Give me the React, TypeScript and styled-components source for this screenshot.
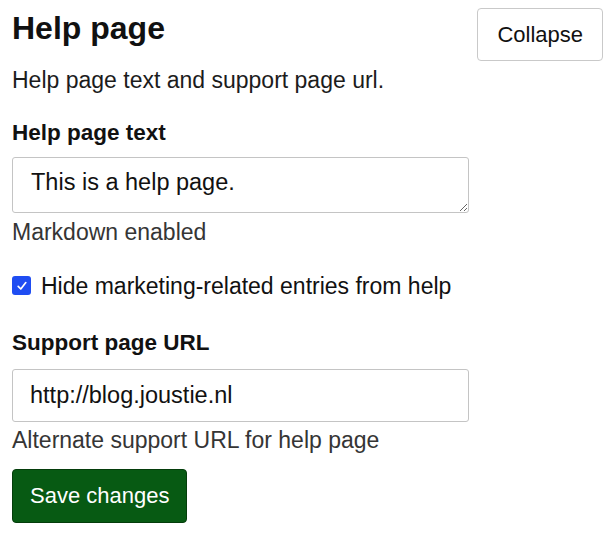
import styled, { createGlobalStyle } from "styled-components";

const GlobalStyle = createGlobalStyle`
  html, body {
    margin: 0;
    padding: 0;
    background: #ffffff;
  }
  body {
    font-family: "Liberation Sans", Arial, sans-serif;
    color: #1c1c1c;
  }
  * {
    box-sizing: border-box;
  }
`;

const Page = styled.div`
  padding: 8px 11px 0 12px;
  width: 614px;
`;

const Header = styled.div`
  display: flex;
  justify-content: space-between;
  align-items: flex-start;
`;

const Title = styled.h2`
  margin: 1px 0 0;
  font-size: 32px;
  line-height: 38px;
  font-weight: 700;
  color: #111;
`;

const Button = styled.button<{ $primary?: boolean }>`
  height: ${(p) => (p.$primary ? "54px" : "53px")};
  padding: 0 ${(p) => (p.$primary ? "17px" : "19px")};
  font-family: "Liberation Sans", Arial, sans-serif;
  font-size: 22px;
  border-radius: 4px;
  border: 1px solid ${(p) => (p.$primary ? "#043d0b" : "#c9c9c9")};
  background: ${(p) => (p.$primary ? "#075a13" : "#ffffff")};
  color: ${(p) => (p.$primary ? "#ffffff" : "#111")};
  cursor: pointer;
`;

const Description = styled.p`
  margin: 4px 0 0;
  font-size: 23px;
  line-height: 30px;
  color: #1c1c1c;
`;

const Form = styled.form`
  display: flex;
  flex-direction: column;
  align-items: flex-start;
`;

const Label = styled.label<{ $gap: number }>`
  margin-top: ${(p) => p.$gap}px;
  font-size: 22.5px;
  line-height: 30px;
  font-weight: 700;
  color: #111;
`;

const TextArea = styled.textarea`
  margin-top: 9px;
  width: 457px;
  height: 56px;
  padding: 9px 18px;
  font-family: "Liberation Sans", Arial, sans-serif;
  font-size: 23.5px;
  line-height: 30px;
  color: #111;
  border: 1px solid #c4c4c4;
  border-radius: 3px;
  resize: both;
  outline: none;
`;

const Input = styled.input`
  margin-top: 11px;
  width: 457px;
  height: 53px;
  padding: 0 17px;
  font-family: "Liberation Sans", Arial, sans-serif;
  font-size: 23.5px;
  color: #111;
  border: 1px solid #c4c4c4;
  border-radius: 3px;
  outline: none;
`;

const Hint = styled.span<{ $gap: number }>`
  margin-top: ${(p) => p.$gap}px;
  font-size: 23px;
  line-height: 30px;
  color: #353535;
`;

const CheckRow = styled.label`
  margin-top: 24px;
  display: flex;
  align-items: center;
  font-size: 23px;
  line-height: 30px;
  color: #111;
`;

const CheckBox = styled.span`
  width: 19px;
  height: 19px;
  margin-right: 10px;
  margin-top: -1px;
  border-radius: 3px;
  background: #1f4df2;
  display: flex;
  align-items: center;
  justify-content: center;
`;

const SaveRow = styled.div`
  margin-top: 14px;
`;

function App() {
  return (
    <>
      <GlobalStyle />
      <Page>
        <Header>
          <Title>Help page</Title>
          <Button type="button">Collapse</Button>
        </Header>
        <Description>Help page text and support page url.</Description>
        <Form onSubmit={(e) => e.preventDefault()}>
          <Label $gap={23} htmlFor="help-text">
            Help page text
          </Label>
          <TextArea id="help-text" defaultValue="This is a help page." />
          <Hint $gap={4}>Markdown enabled</Hint>
          <CheckRow>
            <CheckBox role="checkbox" aria-checked="true">
              <svg width="12" height="12" viewBox="0 0 12 12">
                <path
                  d="M2.2 6.4 L4.8 9 L9.8 2.6"
                  fill="none"
                  stroke="#fff"
                  strokeWidth="1.7"
                  strokeLinecap="round"
                  strokeLinejoin="round"
                />
              </svg>
            </CheckBox>
            Hide marketing-related entries from help
          </CheckRow>
          <Label $gap={27} htmlFor="support-url">
            Support page URL
          </Label>
          <Input id="support-url" defaultValue="http://blog.joustie.nl" />
          <Hint $gap={3}>Alternate support URL for help page</Hint>
          <SaveRow>
            <Button $primary type="submit">
              Save changes
            </Button>
          </SaveRow>
        </Form>
      </Page>
    </>
  );
}

export default App;
